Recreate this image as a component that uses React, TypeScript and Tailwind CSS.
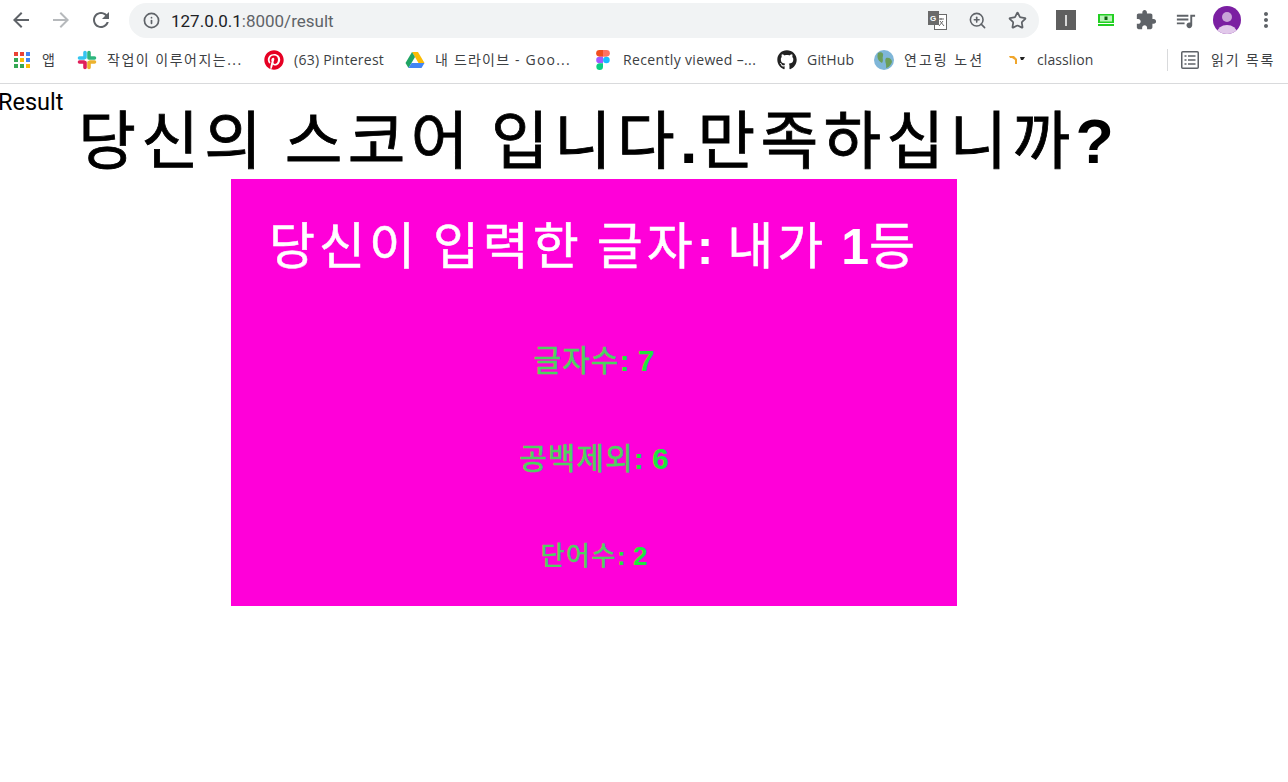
import { Info, ZoomIn, Star } from "lucide-react";
import { FaGithub, FaPinterest } from "react-icons/fa";

const sans = "font-['Open_Sans','Noto_Sans_CJK_KR',sans-serif]";
const heading = "font-['Liberation_Sans','Noto_Sans_CJK_KR',sans-serif]";

function MaterialIcon({ d, size = 24, className = "" }: { d: string; size?: number; className?: string }) {
  return (
    <svg width={size} height={size} viewBox="0 0 24 24" fill="currentColor" className={`shrink-0 ${className}`}>
      <path d={d} />
    </svg>
  );
}

const BACK = "M20 11H7.830l5.590-5.590L12 4l-8 8 8 8 1.410-1.410L7.830 13H20v-2z";
const FORWARD = "M12 4l-1.410 1.410L16.170 11H4v2h12.170l-5.580 5.590L12 20l8-8z";
const RELOAD = "M17.650 6.350C16.200 4.900 14.210 4 12 4c-4.420 0-7.990 3.580-7.990 8s3.570 8 7.990 8c3.730 0 6.840-2.550 7.730-6h-2.080c-.82 2.330-3.040 4-5.650 4-3.310 0-6-2.690-6-6s2.690-6 6-6c1.660 0 3.140.69 4.220 1.780L13 11h7V4l-2.350 2.350z";
const PUZZLE = "M20.500 11H19V7c0-1.100-.9-2-2-2h-4V3.500C13 2.120 11.880 1 10.500 1S8 2.120 8 3.500V5H4c-1.100 0-1.990.9-1.990 2v3.800H3.500c1.490 0 2.700 1.210 2.700 2.700s-1.210 2.700-2.700 2.700H2V20c0 1.100.9 2 2 2h3.800v-1.500c0-1.490 1.210-2.700 2.700-2.700 1.490 0 2.700 1.210 2.700 2.700V22H17c1.100 0 2-.9 2-2v-4h1.500c1.380 0 2.500-1.120 2.500-2.500S21.880 11 20.500 11z";
const QUEUE = "M15 6H3v2h12V6zm0 4H3v2h12v-2zM3 16h8v-2H3v2zM17 6v8.180c-.31-.11-.65-.18-1-.18-1.660 0-3 1.340-3 3s1.340 3 3 3 3-1.340 3-3V8h3V6h-5z";
const DOTS = "M12 8c1.100 0 2-.9 2-2s-.9-2-2-2-2 .9-2 2 .9 2 2 2zm0 2c-1.100 0-2 .9-2 2s.9 2 2 2 2-.9 2-2-.9-2-2-2zm0 6c-1.100 0-2 .9-2 2s.9 2 2 2 2-.9 2-2-.9-2-2-2z";

function AppsIcon() {
  const colors = ["#ea4335", "#ea4335", "#4285f4", "#34a853", "#fbbc04", "#4285f4", "#34a853", "#34a853", "#fbbc04"];
  return (
    <div className="grid grid-cols-3 gap-[2px] w-[16px] shrink-0">
      {colors.map((c, i) => (
        <div key={i} className="w-[4px] h-[4px]" style={{ background: c }} />
      ))}
    </div>
  );
}

function SlackIcon() {
  return (
    <svg width="20" height="20" viewBox="0 0 20 20" fill="none" strokeWidth="3.6" strokeLinecap="round">
      <path d="M8 2.500V7.500M2.500 8H7" stroke="#36c5f0" />
      <path d="M12 2.500V8M13 8H17.500" stroke="#2eb67d" />
      <path d="M12 17.500V12.500M13 12H17.500" stroke="#ecb22e" />
      <path d="M8 17.500V12.500M2.500 12H7" stroke="#e01e5a" />
    </svg>
  );
}

function DriveIcon() {
  return (
    <svg width="20" height="18" viewBox="0 0 20 18">
      <path d="M7 1H13L19.500 12H13.500Z" fill="#fbbc04" />
      <path d="M7 1L0.500 12L3.500 17L10 6Z" fill="#1fa463" />
      <path d="M6.500 12H19.500L16.500 17H3.500Z" fill="#4285f4" />
    </svg>
  );
}

function FigmaIcon() {
  return (
    <svg width="14" height="20" viewBox="0 0 14 20">
      <path d="M7 0H3.500a3.330 3.330 0 0 0 0 6.660H7Z" fill="#f24e1e" />
      <path d="M7 0h3.500a3.330 3.330 0 0 1 0 6.660H7Z" fill="#ff7262" />
      <path d="M7 6.660H3.500a3.330 3.330 0 0 0 0 6.660H7Z" fill="#a259ff" />
      <circle cx="10.400" cy="10" r="3.330" fill="#1abcfe" />
      <path d="M3.500 13.320H7v3.340a3.330 3.330 0 1 1-3.500-3.340Z" fill="#0acf83" />
    </svg>
  );
}

function GlobeIcon() {
  return (
    <svg width="20" height="20" viewBox="0 0 20 20">
      <circle cx="10" cy="10" r="10" fill="#7fb6d8" />
      <path d="M4 3C7 1 10 3 9 6C8 9 10 10 8 13C6 12 2 9 4 3Z" fill="#6b9e5a" />
      <path d="M12 8C15 7 18 9 18 12C17 15 14 18 12 18C13 14 10 11 12 8Z" fill="#6b9e5a" />
    </svg>
  );
}

function LionIcon() {
  return (
    <svg width="18" height="12" viewBox="0 0 18 12">
      <path d="M1 2H6L9 5V10H7V6L4 4H2Z" fill="#f0a62c" />
      <path d="M12 3H17L15 6H13Z" fill="#222222" />
    </svg>
  );
}

function TranslateIcon() {
  return (
    <svg width="20" height="20" viewBox="0 0 20 20" className="shrink-0">
      <rect x="7.500" y="4.500" width="12" height="15" fill="#ffffff" stroke="#6a6a6a" />
      <rect x="1" y="1" width="11" height="14" fill="#6a6a6a" />
      <text x="3" y="11" fontSize="8" fontWeight="700" fill="#ffffff" fontFamily="Liberation Sans">G</text>
      <path d="M11 9H17M14 8V10M12 16L16 11M13 11L17 16" stroke="#6a6a6a" fill="none" />
    </svg>
  );
}

function ScreenIcon() {
  return (
    <svg width="16" height="14" viewBox="0 0 16 14" className="shrink-0">
      <rect x="0" y="1" width="16" height="9" fill="#22cf22" />
      <rect x="2" y="2.500" width="12" height="6" fill="#b8f5b8" />
      <rect x="6.500" y="3.500" width="3" height="3.500" fill="#0f5f0f" />
      <rect x="0" y="11" width="16" height="2" fill="#22cf22" />
    </svg>
  );
}

function ReadingListIcon() {
  return (
    <svg width="18" height="18" viewBox="0 0 18 18" fill="none" stroke="#5f6368" strokeWidth="1.500" className="shrink-0">
      <rect x="0.750" y="0.750" width="16.500" height="16.500" rx="1" />
      <path d="M3.500 5H5.500M3.500 9H5.500M3.500 13H5.500M7 5H14.500M7 9H14.500M7 13H14.500" />
    </svg>
  );
}

function Avatar() {
  return (
    <svg width="28" height="28" viewBox="0 0 28 28" className="shrink-0">
      <clipPath id="avatar-clip">
        <circle cx="14" cy="14" r="14" />
      </clipPath>
      <g clipPath="url(#avatar-clip)">
        <rect width="28" height="28" fill="#7b1fa2" />
        <circle cx="14" cy="11" r="5" fill="#c9a3d8" />
        <ellipse cx="14" cy="27" rx="10" ry="8" fill="#e1c8ea" />
      </g>
    </svg>
  );
}

function Bookmark({ icon, label, className, labelClass }: { icon: React.ReactNode; label: string; className: string; labelClass: string }) {
  return (
    <div className={`flex items-center shrink-0 ${className}`}>
      <div className="w-[20px] flex justify-center shrink-0">{icon}</div>
      <span className={`ml-[10px] text-[14px] leading-[20px] whitespace-nowrap text-[#3c4043] ${sans} ${labelClass}`}>{label}</span>
    </div>
  );
}

// the hangul is light and widely set, the latin around it stays bold
function Mixed({ text, hangulClass }: { text: string; hangulClass: string }) {
  return (
    <>
      {text.split(/([가-힣]+)/).map((part, i) =>
        /[가-힣]/.test(part) ? (
          <span key={i} className={hangulClass}>{part}</span>
        ) : (
          <span key={i}>{part}</span>
        ),
      )}
    </>
  );
}

function Toolbar() {
  return (
    <div className="h-[40px] flex items-center pl-[9px] bg-white">
      <MaterialIcon d={BACK} className="text-[#5f6368]" />
      <MaterialIcon d={FORWARD} className="text-[#b6b9bc] ml-[16px]" />
      <MaterialIcon d={RELOAD} className="text-[#5f6368] ml-[16px]" />
      <div className="ml-[16px] w-[910px] h-[35px] rounded-full bg-[#f1f3f4] flex items-center pl-[14px] pr-[12px] shrink-0">
        <Info size={17} strokeWidth={2.4} className="text-[#5f6368] shrink-0" />
        <span className="ml-[11px] text-[17px] leading-[20px] pt-[1px] text-[#202124] font-['Roboto',sans-serif] whitespace-nowrap">
          127.0.0.1<span className="text-[#5f6368]">:8000/result</span>
        </span>
        <div className="ml-auto flex items-center">
          <TranslateIcon />
          <ZoomIn size={19} className="text-[#5f6368] shrink-0 ml-[21px]" />
          <Star size={19} strokeWidth={2.2} className="text-[#5f6368] shrink-0 ml-[21px]" />
        </div>
      </div>
      <div className="ml-[17px] w-[20px] h-[20px] bg-[#5f5f5f] flex items-center justify-center shrink-0">
        <div className="w-[2px] h-[11px] bg-[#d8d8d8]" />
      </div>
      <div className="ml-[22px]"><ScreenIcon /></div>
      <MaterialIcon d={PUZZLE} size={22} className="text-[#5f6368] ml-[21px]" />
      <MaterialIcon d={QUEUE} size={23} className="text-[#5f6368] ml-[17px]" />
      <div className="ml-[16px]"><Avatar /></div>
      <MaterialIcon d={DOTS} className="text-[#5f6368] ml-[13px]" />
    </div>
  );
}

function BookmarksBar() {
  return (
    <div className="h-[44px] flex items-center pl-[12px] pb-[3px] border-b border-[#d9dadc] bg-white">
      <Bookmark icon={<AppsIcon />} label="앱" className="w-[65px]" labelClass="" />
      <Bookmark icon={<SlackIcon />} label="작업이 이루어지는..." className="w-[187px]" labelClass="tracking-[1.500px]" />
      <Bookmark icon={<FaPinterest size={20} className="text-[#e60023]" />} label="(63) Pinterest" className="w-[141px]" labelClass="tracking-[0.250px]" />
      <Bookmark icon={<DriveIcon />} label="내 드라이브 - Goo..." className="w-[188px]" labelClass="tracking-[1.200px]" />
      <Bookmark icon={<FigmaIcon />} label="Recently viewed –..." className="w-[184px]" labelClass="tracking-[0.350px]" />
      <Bookmark icon={<FaGithub size={20} className="text-[#222222]" />} label="GitHub" className="w-[97px]" labelClass="tracking-[0.200px]" />
      <Bookmark icon={<GlobeIcon />} label="연고링 노션" className="w-[133px]" labelClass="tracking-[2px]" />
      <Bookmark icon={<LionIcon />} label="classlion" className="w-[160px]" labelClass="tracking-[0.100px]" />
      <div className="w-px h-[22px] bg-[#d9dadc] shrink-0" />
      <div className="ml-[13px]"><ReadingListIcon /></div>
      <span className={`ml-[12px] text-[14px] leading-[20px] whitespace-nowrap text-[#3c4043] tracking-[1.800px] ${sans}`}>읽기 목록</span>
    </div>
  );
}

function Stat({ label, size, hangul }: { label: string; size: string; hangul: string }) {
  return (
    <h3 className={`text-center font-bold text-[#1fe53c] leading-[36px] ${heading} ${size}`}>
      <Mixed text={label} hangulClass={`font-normal text-[#4fd060] [-webkit-text-stroke:0.6px_#4fd060] ${hangul}`} />
    </h3>
  );
}

export default function App() {
  return (
    <div className="w-[1288px] h-[782px] overflow-hidden bg-white">
      <Toolbar />
      <BookmarksBar />
      <div className="text-[23.500px] leading-[28px] text-black font-['Roboto',sans-serif] -ml-[2px] h-[28px] pt-[4px]">Result</div>
      <h1 className={`w-[1192px] -mt-[9px] text-center text-[62.700px] leading-[76px] font-bold text-black whitespace-nowrap ${heading}`}>
        <Mixed text="당신의 스코어 입니다.만족하십니까?" hangulClass="font-normal tracking-[0.085em] [-webkit-text-stroke:0.8px_#000000]" />
      </h1>
      <div className="ml-[231px] w-[726px] h-[427px] bg-[#ff00d9] flex flex-col items-center pt-[36px]">
        <h2 className={`text-[50px] leading-[64px] font-bold text-white whitespace-nowrap ${heading}`}>
          <Mixed text="당신이 입력한 글자: 내가 1등" hangulClass="font-normal tracking-[0.08em] [-webkit-text-stroke:0.5px_#ffffff]" />
        </h2>
        <div className="mt-[64px] flex flex-col gap-[61.500px]">
          <Stat label="글자수: 7" size="text-[30px]" hangul="tracking-[0.035em]" />
          <Stat label="공백제외: 6" size="text-[30px]" hangul="tracking-[0.035em]" />
          <Stat label="단어수: 2" size="text-[26px]" hangul="tracking-[0.06em]" />
        </div>
      </div>
    </div>
  );
}
